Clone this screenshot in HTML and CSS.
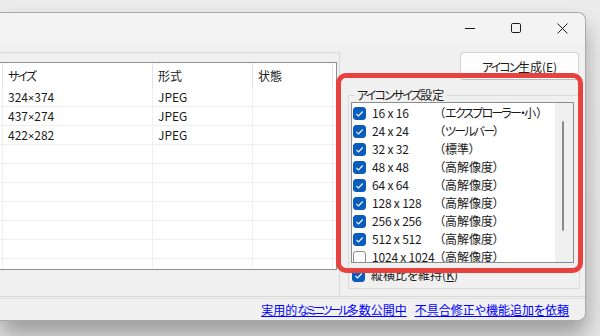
FILE: index.html
```html
<!DOCTYPE html>
<html lang="ja">
<head>
<meta charset="utf-8">
<title>アイコン作成</title>
<link rel="stylesheet" href="styles.css">
</head>
<body>
<div class="window">
  <div class="titlebar">
    <div class="caption-btn"><svg width="10" height="10" viewBox="0 0 10 10"><line x1="0" y1="5.5" x2="10" y2="5.5" stroke="#1a1a1a" stroke-width="1"/></svg></div>
    <div class="caption-btn"><svg width="10" height="10" viewBox="0 0 10 10"><rect x="0.5" y="0.5" width="9" height="9" rx="1.2" fill="none" stroke="#1a1a1a" stroke-width="1"/></svg></div>
    <div class="caption-btn"><svg width="11" height="11" viewBox="0 0 11 11"><path d="M0.5 0.5 L10.5 10.5 M10.5 0.5 L0.5 10.5" stroke="#1a1a1a" stroke-width="1" fill="none"/></svg></div>
  </div>
  <div class="client">
    <div class="main">
      <div class="left-pane">
        <div class="listview">
          <div class="lv-row lv-header">
            <div class="cell c0"></div><div class="cell c1"><span class="k">サイズ</span></div><div class="cell c2">形式</div><div class="cell c3">状態</div><div class="cell c4"></div>
          </div>
          <div class="lv-row"><div class="cell c0"></div><div class="cell c1">324<span class="x">×</span>374</div><div class="cell c2">JPEG</div><div class="cell c3"></div><div class="cell c4"></div></div>
          <div class="lv-row"><div class="cell c0"></div><div class="cell c1">437<span class="x">×</span>274</div><div class="cell c2">JPEG</div><div class="cell c3"></div><div class="cell c4"></div></div>
          <div class="lv-row"><div class="cell c0"></div><div class="cell c1">422<span class="x">×</span>282</div><div class="cell c2">JPEG</div><div class="cell c3"></div><div class="cell c4"></div></div>
          <div class="lv-row"><div class="cell c0"></div><div class="cell c1"></div><div class="cell c2"></div><div class="cell c3"></div><div class="cell c4"></div></div>
          <div class="lv-row"><div class="cell c0"></div><div class="cell c1"></div><div class="cell c2"></div><div class="cell c3"></div><div class="cell c4"></div></div>
          <div class="lv-row"><div class="cell c0"></div><div class="cell c1"></div><div class="cell c2"></div><div class="cell c3"></div><div class="cell c4"></div></div>
          <div class="lv-row"><div class="cell c0"></div><div class="cell c1"></div><div class="cell c2"></div><div class="cell c3"></div><div class="cell c4"></div></div>
          <div class="lv-row"><div class="cell c0"></div><div class="cell c1"></div><div class="cell c2"></div><div class="cell c3"></div><div class="cell c4"></div></div>
          <div class="lv-row"><div class="cell c0"></div><div class="cell c1"></div><div class="cell c2"></div><div class="cell c3"></div><div class="cell c4"></div></div>
          <div class="lv-row"><div class="cell c0"></div><div class="cell c1"></div><div class="cell c2"></div><div class="cell c3"></div><div class="cell c4"></div></div>
        </div>
      </div>
      <div class="right-pane">
        <div class="btn-row"><button class="btn" type="button"><span class="k">アイコン</span>生成(<u>E</u>)</button></div>
        <fieldset class="group">
          <legend><span class="k">アイコンサイズ</span>設定</legend>
          <div class="listbox">
            <div class="items">
              <div class="item"><span class="chk on"><svg width="13" height="13" viewBox="0 0 13 13"><path d="M3.4 6.9 L5.5 8.9 L9.7 4.5" stroke="#fff" stroke-width="1.1" fill="none"/></svg></span><span class="size">16 x 16</span><span class="desc">（<span class="k">エクスプローラー・</span>小）</span></div>
              <div class="item"><span class="chk on"><svg width="13" height="13" viewBox="0 0 13 13"><path d="M3.4 6.9 L5.5 8.9 L9.7 4.5" stroke="#fff" stroke-width="1.1" fill="none"/></svg></span><span class="size">24 x 24</span><span class="desc">（<span class="k">ツールバー</span>）</span></div>
              <div class="item"><span class="chk on"><svg width="13" height="13" viewBox="0 0 13 13"><path d="M3.4 6.9 L5.5 8.9 L9.7 4.5" stroke="#fff" stroke-width="1.1" fill="none"/></svg></span><span class="size">32 x 32</span><span class="desc">（標準）</span></div>
              <div class="item"><span class="chk on"><svg width="13" height="13" viewBox="0 0 13 13"><path d="M3.4 6.9 L5.5 8.9 L9.7 4.5" stroke="#fff" stroke-width="1.1" fill="none"/></svg></span><span class="size">48 x 48</span><span class="desc">（高解像度）</span></div>
              <div class="item"><span class="chk on"><svg width="13" height="13" viewBox="0 0 13 13"><path d="M3.4 6.9 L5.5 8.9 L9.7 4.5" stroke="#fff" stroke-width="1.1" fill="none"/></svg></span><span class="size">64 x 64</span><span class="desc">（高解像度）</span></div>
              <div class="item"><span class="chk on"><svg width="13" height="13" viewBox="0 0 13 13"><path d="M3.4 6.9 L5.5 8.9 L9.7 4.5" stroke="#fff" stroke-width="1.1" fill="none"/></svg></span><span class="size">128 x 128</span><span class="desc">（高解像度）</span></div>
              <div class="item"><span class="chk on"><svg width="13" height="13" viewBox="0 0 13 13"><path d="M3.4 6.9 L5.5 8.9 L9.7 4.5" stroke="#fff" stroke-width="1.1" fill="none"/></svg></span><span class="size">256 x 256</span><span class="desc">（高解像度）</span></div>
              <div class="item"><span class="chk on"><svg width="13" height="13" viewBox="0 0 13 13"><path d="M3.4 6.9 L5.5 8.9 L9.7 4.5" stroke="#fff" stroke-width="1.1" fill="none"/></svg></span><span class="size">512 x 512</span><span class="desc">（高解像度）</span></div>
              <div class="item"><span class="chk"></span><span class="size">1024 x 1024</span><span class="desc">（高解像度）</span></div>
            </div>
            <div class="scrollbar"><div class="thumb"></div></div>
          </div>
          <div class="option"><span class="chk on"><svg width="13" height="13" viewBox="0 0 13 13"><path d="M3.4 6.9 L5.5 8.9 L9.7 4.5" stroke="#fff" stroke-width="1.1" fill="none"/></svg></span><span>縦横比を維持(<u>K</u>)</span></div>
        </fieldset>
      </div>
    </div>
    <div class="sep"></div>
    <div class="status">
      <a class="link" href="#">実用的<span class="k2">なミニツール</span>多数公開中</a>
      <a class="link" href="#">不具合修正や機能追加を依頼</a>
    </div>
  </div>
  <div class="annotation"></div>
</div>
</body>
</html>
```

FILE: styles.css
```css
* { box-sizing: border-box; }
html, body { margin: 0; }
body {
  width: 600px;
  height: 336px;
  overflow: hidden;
  padding-top: 12px;
  background: linear-gradient(to bottom, #ececec 0, #e6e6e6 100%);
  font-family: "Noto Sans CJK JP", "Noto Sans", sans-serif;
  font-size: 12px;
  color: #1b1b1b;
  font-feature-settings: "palt";
}
.k { letter-spacing: -1.8px; }
.k2 { letter-spacing: -2.9px; }
.x { font-family: "Noto Sans", sans-serif; font-size: 11px; }
.window {
  position: relative;
  width: 586px;
  height: 309px;
  border: 1px solid #a9a9a9;
  border-left: none;
  border-radius: 0 8px 8px 0;
  background: #f0f0f0;
  box-shadow: 0 14px 22px rgba(0, 0, 0, 0.32);
  display: flex;
  flex-direction: column;
}
.titlebar {
  flex: none;
  height: 30px;
  background: #f3f3f3;
  border-radius: 0 8px 0 0;
  display: flex;
  justify-content: flex-end;
}
.caption-btn {
  width: 46px;
  height: 30px;
  display: flex;
  align-items: center;
  justify-content: center;
}
.client {
  flex: 1;
  display: flex;
  flex-direction: column;
  border-radius: 0 0 8px 0;
}
.main {
  flex: none;
  height: 253px;
  display: flex;
}
.left-pane {
  flex: none;
  width: 340px;
  margin-top: 9px;
  padding: 9px 2px 0 0;
  border-top: 1px solid #d9d9d9;
  border-right: 1px solid #d9d9d9;
}
.listview {
  height: 208px;
  background: #fff;
  border: 1px solid #8e8e8e;
  border-left: none;
  overflow: hidden;
}
.lv-row {
  display: flex;
  height: 19px;
  border-bottom: 1px solid #efefef;
  line-height: 18px;
}
.lv-header {
  height: 25px;
  line-height: 25px;
  border-bottom: none;
}
.cell {
  flex: none;
  padding-left: 5px;
  border-right: 1px solid #efefef;
  white-space: nowrap;
  overflow: hidden;
}
.lv-header .cell { border-right-color: #e3e3e3; }
.c0 { width: 3px; padding-left: 0; }
.c1 { width: 150px; }
.c2 { width: 100px; }
.c3 { width: 80px; }
.c4 { flex: 1; border-right: none; }

.right-pane {
  flex: 1;
  padding: 9px 5px 0 8px;
  display: flex;
  flex-direction: column;
}
.btn-row {
  display: flex;
  justify-content: flex-end;
}
.btn {
  width: 119px;
  height: 28px;
  margin: 0 1px 0 0;
  padding: 0;
  background: #fdfdfd;
  border: 1px solid #d3d3d3;
  border-bottom-color: #bdbdbd;
  border-radius: 4px;
  font: inherit;
  color: #1b1b1b;
  line-height: 25px;
}
.group {
  margin: 8px 0 0 0;
  padding: 0 5px 4px 2px;
  border: 1px solid #dadada;
  min-width: 0;
}
.group legend {
  margin-left: 3px;
  padding: 0 3px;
  line-height: 14px;
}
.listbox {
  height: 161px;
  display: flex;
  background: #fff;
  border: 1px solid #8c8c8c;
}
.items {
  flex: 1;
  padding-top: 1px;
  overflow: hidden;
}
.item, .option {
  height: 18px;
  display: flex;
  align-items: center;
  white-space: nowrap;
  line-height: 18px;
}
.chk {
  flex: none;
  width: 13px;
  height: 13px;
  margin: 0 6px 0 1px;
  border: 1px solid #8a8a8a;
  border-radius: 3px;
  background: #fbfbfb;
  display: flex;
}
.chk.on {
  border-color: #0a5cbd;
  background: #0a5cbd;
}
.chk svg { margin: -1px; }
.size {
  flex: none;
  width: 67px;
  letter-spacing: -0.2px;
}
.scrollbar {
  flex: none;
  width: 18px;
  background: #f0f0f0;
  padding: 18px 0 0 7px;
}
.thumb {
  width: 2px;
  height: 110px;
  background: #8a8a8a;
  border-radius: 1px;
}
.option { margin-top: 3px; }

.sep {
  flex: none;
  height: 3px;
  border-top: 1px solid #d8d8d8;
  border-bottom: 1px solid #e2e2e2;
}
.status {
  flex: 1;
  display: flex;
  justify-content: flex-end;
  gap: 8px;
  padding-right: 16px;
  line-height: 21px;
}
.link {
  color: #0000ff;
  text-decoration: underline;
}
.annotation {
  position: absolute;
  top: 60px;
  left: 336px;
  width: 247px;
  height: 200px;
  border: 5px solid #e8423f;
  border-radius: 10px;
}
```
